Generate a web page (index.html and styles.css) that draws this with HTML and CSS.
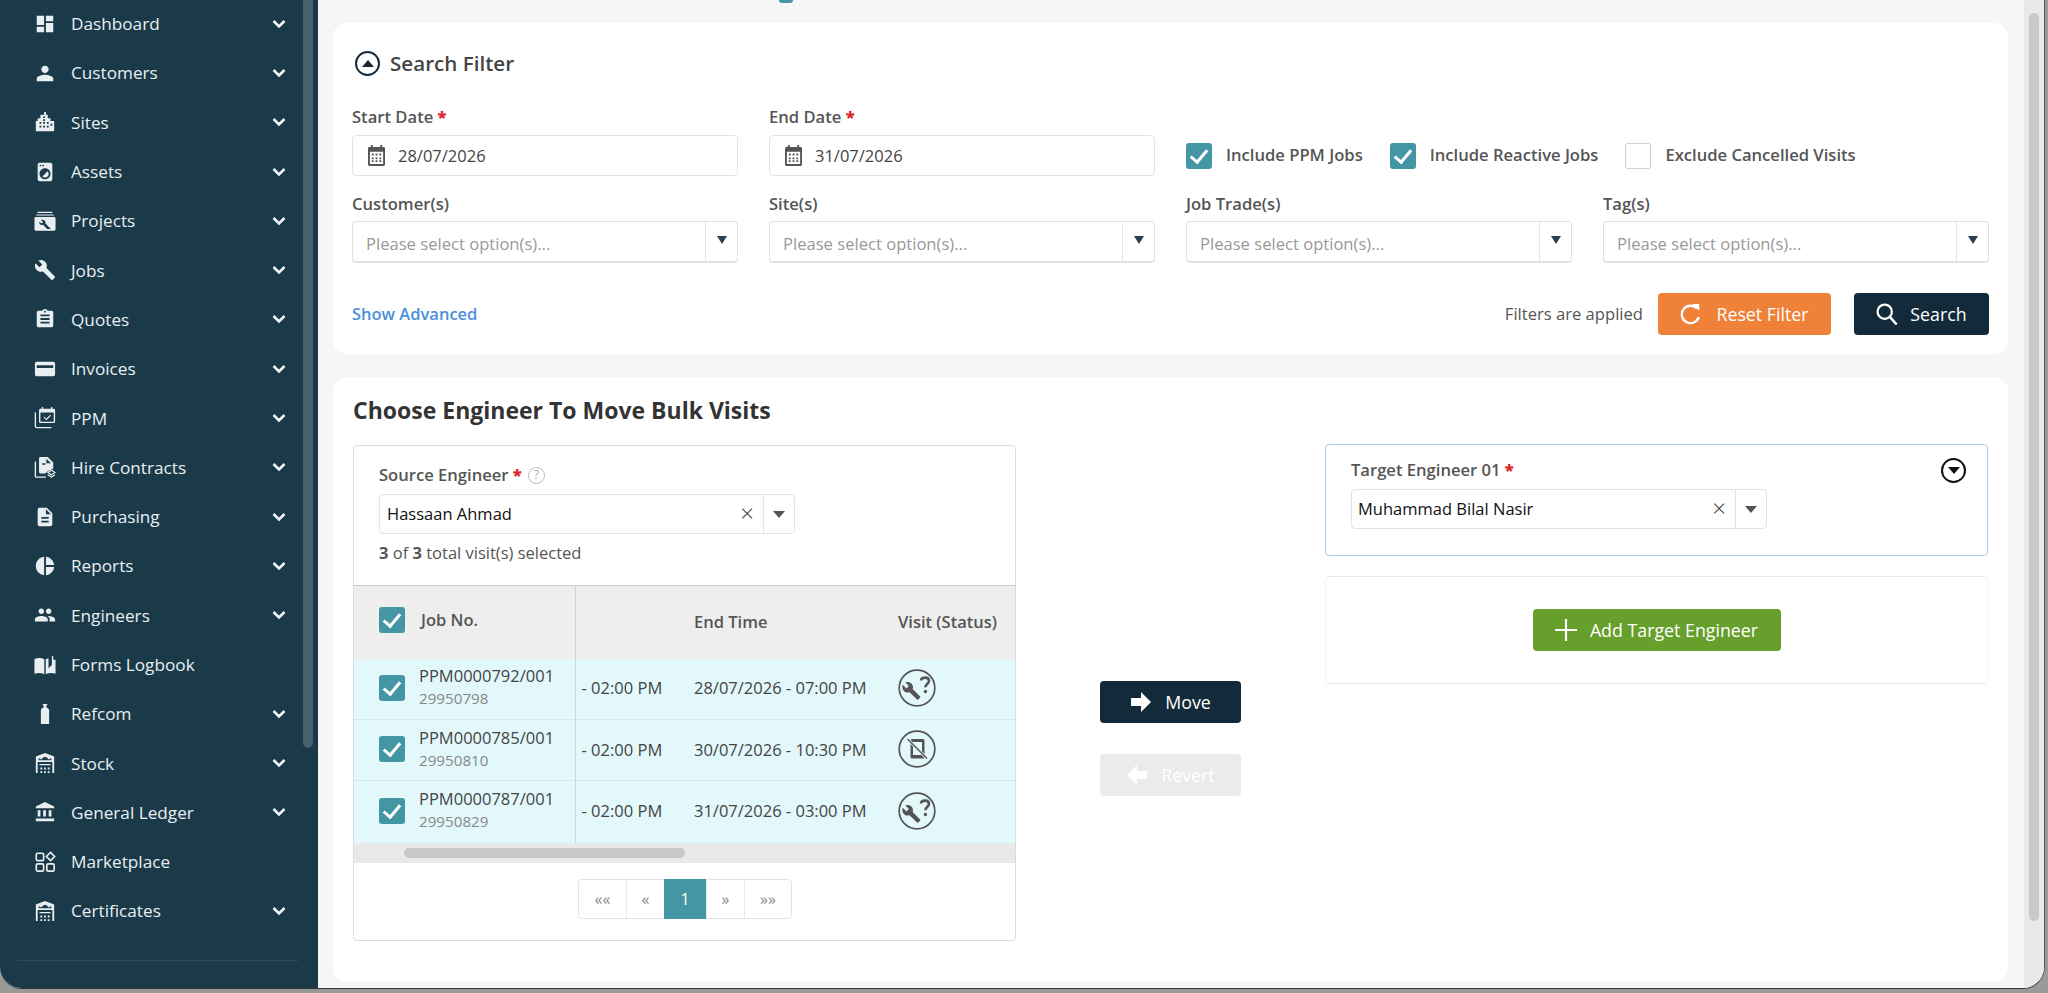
FILE: index.html
```html
<!DOCTYPE html>
<html lang="en">
<head>
    <meta charset="UTF-8">
    <meta name="viewport" content="width=device-width, initial-scale=1.0">
    <link rel="stylesheet" href="styles.css">
    <title>Bulk Move Visits</title>
</head>
<body>
    <!-- iconos reutilizables -->
    <svg class="iconos" xmlns="http://www.w3.org/2000/svg">
        <symbol id="i-chevron" viewBox="0 0 14 10"><path d="M1.5 2l5.5 5.5L12.5 2" fill="none" stroke="currentColor" stroke-width="2.6"/></symbol>
        <symbol id="i-dashboard" viewBox="0 0 24 24"><path d="M3 13h8V3H3v10zm0 8h8v-6H3v6zm10 0h8V11h-8v10zm0-18v6h8V3h-8z"/></symbol>
        <symbol id="i-person" viewBox="0 0 24 24"><path d="M12 12c2.21 0 4-1.79 4-4s-1.79-4-4-4-4 1.79-4 4 1.79 4 4 4zm0 2c-2.67 0-9 1.34-9 4v3h18v-3c0-2.66-6.33-4-9-4z"/></symbol>
        <symbol id="i-sites" viewBox="0 0 24 24"><path fill-rule="evenodd" d="M11 1h2v3h2v4h3v3h4v11H2V11h2V8h3V4h4zM6 12v2h2v-2zm4 0v2h2v-2zm4 0v2h2v-2zm4 2v2h2v-2zM6 16v2h2v-2zm4 0v2h2v-2zm4 0v2h2v-2zm-4-7v2h2V9zm0-3v1.500h2V6z"/></symbol>
        <symbol id="i-laundry" viewBox="0 0 24 24"><path d="M9.170 16.830c1.560 1.560 4.100 1.560 5.660 0 1.560-1.560 1.560-4.100 0-5.660l-5.660 5.660zM18 2.010L6 2c-1.110 0-2 .89-2 2v16c0 1.110.89 2 2 2h12c1.110 0 2-.89 2-2V4c0-1.110-.89-1.990-2-1.990zM10 4c.55 0 1 .45 1 1s-.45 1-1 1-1-.45-1-1 .45-1 1-1zM7 4c.55 0 1 .45 1 1s-.45 1-1 1-1-.45-1-1 .45-1 1-1zm5 16c-3.310 0-6-2.690-6-6s2.690-6 6-6 6 2.690 6 6-2.690 6-6 6z"/></symbol>
        <symbol id="i-projects" viewBox="0 0 24 24"><path d="M4 2h16v1.200H4zM2.500 4.800h19V6h-19z"/><path fill-rule="evenodd" d="M2 7.500h20a1.500 1.500 0 0 1 1.500 1.500v12a1.500 1.500 0 0 1-1.500 1.500H2A1.500 1.500 0 0 1 .5 21V9A1.500 1.500 0 0 1 2 7.500zm5.500 3.500l2.500 2-1.700 1.700-2.500-2c-.5 2.500 1.700 4.300 4 3.500l4.500 4.500h4.200l-6-6c.6-2.800-2.200-5-5-3.700z"/></symbol>
        <symbol id="i-wrench" viewBox="0 0 24 24"><path d="M22.700 19l-9.100-9.100c.9-2.300.4-5-1.500-6.900-2-2-5-2.400-7.400-1.300L9 6 6 9 1.600 4.700C.4 7.100.9 10.100 2.900 12.100c1.900 1.900 4.600 2.400 6.900 1.500l9.100 9.100c.4.4 1 .4 1.400 0l2.300-2.300c.5-.4.5-1.100.1-1.400z"/></symbol>
        <symbol id="i-assign" viewBox="0 0 24 24"><path d="M19 3h-4.180C14.400 1.840 13.300 1 12 1c-1.300 0-2.400.84-2.820 2H5c-1.100 0-2 .9-2 2v14c0 1.100.9 2 2 2h14c1.100 0 2-.9 2-2V5c0-1.100-.9-2-2-2zm-7 0c.55 0 1 .45 1 1s-.45 1-1 1-1-.45-1-1 .45-1 1-1zm5 14H7v-2h10v2zm0-4H7v-2h10v2zm0-4H7V7h10v2z"/></symbol>
        <symbol id="i-card" viewBox="0 0 24 24"><path fill-rule="evenodd" d="M3 4h18a2 2 0 0 1 2 2v12a2 2 0 0 1-2 2H3a2 2 0 0 1-2-2V6a2 2 0 0 1 2-2zm0 4v3h18V8z"/></symbol>
        <symbol id="i-ppm" viewBox="0 0 24 24"><path fill-rule="evenodd" d="M7 2h14.500a1.500 1.500 0 0 1 1.500 1.500V16a1.500 1.500 0 0 1-1.500 1.500H7A1.500 1.500 0 0 1 5.500 16V3.500A1.500 1.500 0 0 1 7 2zm0 4v10h14.500V6z"/><path d="M8.500 0h1.500v3H8.500zM18.500 0H20v3h-1.500z"/><path d="M11 11l2.500 2.500 4.500-4.500" fill="none" stroke="currentColor" stroke-width="1.200"/><path d="M1.500 6v15a1.500 1.500 0 0 0 1.500 1.500h16" fill="none" stroke="currentColor" stroke-width="1.500"/></symbol>
        <symbol id="i-hire" viewBox="0 0 24 24"><path fill-rule="evenodd" d="M7 1h8l6 6v7l-5 2-3 2v1H7a1.500 1.500 0 0 1-1.500-1.500v-15A1.500 1.500 0 0 1 7 1zm2 7v1.500h3.500V8zm4.500-5v5h5z"/><path d="M1.500 6v16a1 1 0 0 0 1 1H13" fill="none" stroke="currentColor" stroke-width="1.500"/><path d="M19 15.500l4 2.500-4 2.500-4-2.500zM15 20.500l4 2.500 4-2.500" fill="none" stroke="currentColor" stroke-width="1.200"/></symbol>
        <symbol id="i-doc" viewBox="0 0 24 24"><path d="M14 2H6c-1.100 0-1.990.9-1.990 2L4 20c0 1.100.89 2 1.990 2H18c1.100 0 2-.9 2-2V8l-6-6zm2 16H8v-2h8v2zm0-4H8v-2h8v2zm-3-5V3.500L18.500 9H13z"/></symbol>
        <symbol id="i-pie" viewBox="0 0 24 24"><path d="M11 2v20c-5.070-.5-9-4.790-9-10s3.930-9.500 9-10zm2.030 0v8.990H22c-.47-4.740-4.240-8.520-8.970-8.990zm0 11.010V22c4.740-.47 8.500-4.250 8.970-8.990h-8.970z"/></symbol>
        <symbol id="i-people" viewBox="0 0 24 24"><path d="M16 11c1.660 0 2.990-1.340 2.990-3S17.660 5 16 5c-1.660 0-3 1.340-3 3s1.340 3 3 3zm-8 0c1.660 0 2.990-1.340 2.990-3S9.660 5 8 5C6.340 5 5 6.340 5 8s1.340 3 3 3zm0 2c-2.330 0-7 1.170-7 3.500V19h14v-2.500c0-2.330-4.670-3.500-7-3.500zm8 0c-.29 0-.62.02-.97.05 1.160.84 1.970 1.970 1.970 3.450V19h6v-2.500c0-2.330-4.670-3.500-7-3.500z"/></symbol>
        <symbol id="i-book" viewBox="0 0 24 24"><path d="M.5 5.500c3.500-1.500 7.500-1.500 10.700.3V22c-3.200-1.700-7.200-1.700-10.700-.4z"/><path d="M12.800 5.800c.9-.5 1.900-.9 3-1.100V15.500l3.700-3.500V2.300l1.400-.4V6c.9.100 1.700.3 2.600.5v15.100c-3.500-1.300-7.500-1.300-10.700.4z"/></symbol>
        <symbol id="i-bottle" viewBox="0 0 24 24"><path d="M9.500 1h5v1.500h-1V5c2 .5 3 1.800 3 3.500V22a1 1 0 0 1-1 1h-7a1 1 0 0 1-1-1V8.500C7.500 6.800 8.500 5.500 10.500 5V2.500h-1z"/></symbol>
        <symbol id="i-store" viewBox="0 0 24 24"><path fill-rule="evenodd" d="M12 1l10 4v18h-2V11H4v12H2V5zM5 7v2h14V7l-2 .1V8h-2V6.500l-3-1.200-3 1.200V8H7v-.9z"/><path d="M6 13h12v1.500H6zM7 17h2v2H7zM11 17h2v2h-2zM15 17h2v2h-2zM7 21h2v2H7zM11 21h2v2h-2zM15 21h2v2h-2z"/></symbol>
        <symbol id="i-bank" viewBox="0 0 24 24"><path d="M4 10v7h3v-7H4zm6 0v7h3v-7h-3zM2 22h20v-3H2v3zm14-12v7h3v-7h-3zM12 1L2 6v2h20V6L12 1z"/></symbol>
        <symbol id="i-market" viewBox="0 0 24 24"><g fill="none" stroke="currentColor" stroke-width="1.800"><rect x="2.500" y="2.500" width="8" height="8" rx="1.500"/><rect x="2.500" y="14" width="8" height="8" rx="1.500"/><rect x="14" y="14" width="8" height="8" rx="1.500"/><path d="M18 1.500l4.500 4.500-4.500 4.500-4.500-4.500z"/></g></symbol>
        <symbol id="i-calendar" viewBox="0 0 18 22"><path fill-rule="evenodd" d="M3 0h2v2h8V0h2v2h1.500A1.500 1.500 0 0 1 18 3.500v17a1.500 1.500 0 0 1-1.500 1.500h-15A1.500 1.500 0 0 1 0 20.500v-17A1.500 1.500 0 0 1 1.500 2H3zM2 7v13h14V7zm2 2h2v2H4zm4 0h2v2H8zm4 0h2v2h-2zm-8 4h2v2H4zm4 0h2v2H8zm4 0h2v2h-2zm-8 3h2v2H4zm4 0h2v2H8zm4 0h2v2h-2z"/></symbol>
        <symbol id="i-status-q" viewBox="0 0 38 38"><circle cx="19" cy="19" r="17.800" fill="none" stroke="currentColor" stroke-width="1.700"/><path transform="translate(3.500 12) scale(.82)" d="M22.700 19l-9.100-9.100c.9-2.300.4-5-1.500-6.900-2-2-5-2.400-7.400-1.300L9 6 6 9 1.600 4.700C.4 7.100.9 10.100 2.900 12.100c1.900 1.900 4.600 2.400 6.900 1.500l9.100 9.100c.4.400 1 .4 1.400 0l2.300-2.300c.5-.4.5-1.100.1-1.400z" fill="currentColor"/><path d="M23 11.500c.3-3.800 8-4 8 .3 0 3-3.400 2.800-3.600 6.500" fill="none" stroke="currentColor" stroke-width="2.600"/><circle cx="27.400" cy="22.500" r="1.700" fill="currentColor"/></symbol>
        <symbol id="i-status-x" viewBox="0 0 38 38"><circle cx="19" cy="19" r="17.800" fill="none" stroke="currentColor" stroke-width="1.700"/><path fill-rule="evenodd" d="M14 9h11a1.500 1.500 0 0 1 1.500 1.500v16.500a1.500 1.500 0 0 1-1.500 1.500H14a1.500 1.500 0 0 1-1.500-1.500V10.500A1.500 1.500 0 0 1 14 9zm1 3v13h9V12z" fill="currentColor"/><path d="M9.500 9l19.500 19.500" stroke="#e2f8fb" stroke-width="3"/><path d="M9.500 9l19.500 19.500" stroke="currentColor" stroke-width="1.500"/></symbol>
    </svg>

    <div class="ventana">
        <aside class="lateral">
            <div class="lateral-scroll">
                <ul class="menu">
                    <li><svg class="ico"><use href="#i-dashboard"/></svg>Dashboard<svg class="flecha"><use href="#i-chevron"/></svg></li>
                    <li><svg class="ico"><use href="#i-person"/></svg>Customers<svg class="flecha"><use href="#i-chevron"/></svg></li>
                    <li><svg class="ico"><use href="#i-sites"/></svg>Sites<svg class="flecha"><use href="#i-chevron"/></svg></li>
                    <li><svg class="ico"><use href="#i-laundry"/></svg>Assets<svg class="flecha"><use href="#i-chevron"/></svg></li>
                    <li><svg class="ico"><use href="#i-projects"/></svg>Projects<svg class="flecha"><use href="#i-chevron"/></svg></li>
                    <li><svg class="ico"><use href="#i-wrench"/></svg>Jobs<svg class="flecha"><use href="#i-chevron"/></svg></li>
                    <li><svg class="ico"><use href="#i-assign"/></svg>Quotes<svg class="flecha"><use href="#i-chevron"/></svg></li>
                    <li><svg class="ico"><use href="#i-card"/></svg>Invoices<svg class="flecha"><use href="#i-chevron"/></svg></li>
                    <li><svg class="ico"><use href="#i-ppm"/></svg>PPM<svg class="flecha"><use href="#i-chevron"/></svg></li>
                    <li><svg class="ico"><use href="#i-hire"/></svg>Hire Contracts<svg class="flecha"><use href="#i-chevron"/></svg></li>
                    <li><svg class="ico"><use href="#i-doc"/></svg>Purchasing<svg class="flecha"><use href="#i-chevron"/></svg></li>
                    <li><svg class="ico"><use href="#i-pie"/></svg>Reports<svg class="flecha"><use href="#i-chevron"/></svg></li>
                    <li><svg class="ico"><use href="#i-people"/></svg>Engineers<svg class="flecha"><use href="#i-chevron"/></svg></li>
                    <li><svg class="ico"><use href="#i-book"/></svg>Forms Logbook</li>
                    <li><svg class="ico"><use href="#i-bottle"/></svg>Refcom<svg class="flecha"><use href="#i-chevron"/></svg></li>
                    <li><svg class="ico"><use href="#i-store"/></svg>Stock<svg class="flecha"><use href="#i-chevron"/></svg></li>
                    <li><svg class="ico"><use href="#i-bank"/></svg>General Ledger<svg class="flecha"><use href="#i-chevron"/></svg></li>
                    <li><svg class="ico"><use href="#i-market"/></svg>Marketplace</li>
                    <li><svg class="ico"><use href="#i-store"/></svg>Certificates<svg class="flecha"><use href="#i-chevron"/></svg></li>
                </ul>
                <hr class="separador">
            </div>
            <div class="lateral-barra"><span></span></div>
        </aside>

        <main class="principal">
            <div class="contenido">
                <div class="asomo"></div>

                <section class="tarjeta filtro">
                    <h2 class="filtro-titulo">
                        <span class="circulo"><span class="tri-arriba"></span></span>
                        Search Filter
                    </h2>
                    <div class="filtro-campos">
                        <div class="campo">
                            <label>Start Date <b>*</b></label>
                            <div class="entrada"><svg class="cal"><use href="#i-calendar"/></svg>28/07/2026</div>
                        </div>
                        <div class="campo">
                            <label>End Date <b>*</b></label>
                            <div class="entrada"><svg class="cal"><use href="#i-calendar"/></svg>31/07/2026</div>
                        </div>
                        <div class="marcas">
                            <span class="marca"><i class="check"></i><span>Include PPM Jobs</span></span>
                            <span class="marca"><i class="check"></i><span>Include Reactive Jobs</span></span>
                            <span class="marca"><i class="check vacio"></i><span>Exclude Cancelled Visits</span></span>
                        </div>
                        <div class="campo">
                            <label>Customer(s)</label>
                            <div class="selector"><span>Please select option(s)...</span><em></em></div>
                        </div>
                        <div class="campo">
                            <label>Site(s)</label>
                            <div class="selector"><span>Please select option(s)...</span><em></em></div>
                        </div>
                        <div class="campo">
                            <label>Job Trade(s)</label>
                            <div class="selector"><span>Please select option(s)...</span><em></em></div>
                        </div>
                        <div class="campo">
                            <label>Tag(s)</label>
                            <div class="selector"><span>Please select option(s)...</span><em></em></div>
                        </div>
                    </div>
                    <div class="filtro-pie">
                        <a class="avanzado">Show Advanced</a>
                        <div class="filtro-acciones">
                            <span class="aplicados">Filters are applied</span>
                            <button class="btn btn-naranja">
                                <svg class="btn-ico" viewBox="0 0 24 24"><path d="M18.500 6A9.500 9.500 0 1 0 20.500 15.500" fill="none" stroke="currentColor" stroke-width="2.600"/><path d="M13.500 1h7.500v7.500z" fill="currentColor"/></svg>
                                Reset Filter
                            </button>
                            <button class="btn btn-oscuro btn-buscar">
                                <svg class="btn-ico" viewBox="0 0 24 24"><circle cx="9.500" cy="9.500" r="7.800" fill="none" stroke="currentColor" stroke-width="2.400"/><path d="M15 15l7.500 8.500" stroke="currentColor" stroke-width="2.800"/></svg>
                                Search
                            </button>
                        </div>
                    </div>
                </section>

                <section class="tarjeta mover">
                    <h2 class="mover-titulo">Choose Engineer To Move Bulk Visits</h2>
                    <div class="mover-columnas">
                        <div class="origen">
                            <div class="origen-cabecera">
                                <label>Source Engineer <b>*</b><span class="ayuda">?</span></label>
                                <div class="combo combo-origen"><span>Hassaan Ahmad</span><u>&times;</u><em></em></div>
                                <p class="resumen"><strong>3</strong> of <strong>3</strong> total visit(s) selected</p>
                            </div>
                            <table class="visitas">
                                <colgroup><col class="c-job"><col class="c-ini"><col class="c-fin"><col></colgroup>
                                <thead>
                                    <tr>
                                        <th class="job"><div class="job-fila"><i class="check"></i><span>Job No.</span></div></th>
                                        <th></th>
                                        <th>End Time</th>
                                        <th>Visit (Status)</th>
                                    </tr>
                                </thead>
                                <tbody>
                                    <tr>
                                        <td class="job"><div class="job-fila"><i class="check"></i><div>PPM0000792/001<small>29950798</small></div></div></td>
                                        <td>- 02:00 PM</td>
                                        <td>28/07/2026 - 07:00 PM</td>
                                        <td><svg class="estado"><use href="#i-status-q"/></svg></td>
                                    </tr>
                                    <tr>
                                        <td class="job"><div class="job-fila"><i class="check"></i><div>PPM0000785/001<small>29950810</small></div></div></td>
                                        <td>- 02:00 PM</td>
                                        <td>30/07/2026 - 10:30 PM</td>
                                        <td><svg class="estado"><use href="#i-status-x"/></svg></td>
                                    </tr>
                                    <tr>
                                        <td class="job"><div class="job-fila"><i class="check"></i><div>PPM0000787/001<small>29950829</small></div></div></td>
                                        <td>- 02:00 PM</td>
                                        <td>31/07/2026 - 03:00 PM</td>
                                        <td><svg class="estado"><use href="#i-status-q"/></svg></td>
                                    </tr>
                                </tbody>
                            </table>
                            <div class="barra-h"><span></span></div>
                            <ul class="paginas">
                                <li class="p-ext">&laquo;&laquo;</li>
                                <li class="p-int">&laquo;</li>
                                <li class="activa">1</li>
                                <li class="p-int">&raquo;</li>
                                <li class="p-ext">&raquo;&raquo;</li>
                            </ul>
                        </div>

                        <div class="centro">
                            <button class="btn btn-oscuro">
                                <svg class="flecha-btn" viewBox="0 0 22 20"><path d="M1 6h10V0l10 10-10 10v-6H1z" fill="currentColor"/></svg>
                                Move
                            </button>
                            <button class="btn btn-apagado">
                                <svg class="flecha-btn" viewBox="0 0 22 20"><path d="M21 6H11V0L1 10l10 10v-6h10z" fill="currentColor"/></svg>
                                Revert
                            </button>
                        </div>

                        <div class="destino">
                            <div class="destino-panel">
                                <div class="destino-cabecera">
                                    <label>Target Engineer 01 <b>*</b></label>
                                    <span class="circulo negro"><span class="tri-abajo"></span></span>
                                </div>
                                <div class="combo combo-destino"><span>Muhammad Bilal Nasir</span><u>&times;</u><em></em></div>
                            </div>
                            <div class="destino-nuevo">
                                <button class="btn btn-verde">
                                    <svg class="btn-ico" viewBox="0 0 20 20"><path d="M10 0v20M0 10h20" stroke="currentColor" stroke-width="2"/></svg>
                                    Add Target Engineer
                                </button>
                            </div>
                        </div>
                    </div>
                </section>
            </div>
            <div class="barra-v"><span></span></div>
        </main>
    </div>
</body>
</html>
```

FILE: styles.css
```css
* {
    margin: 0;
    padding: 0;
    box-sizing: border-box;
    font-family: 'Open Sans', 'Liberation Sans', sans-serif;
}
html, body {
    height: 100%;
    overflow: hidden;
}
body {
    background: #9a9a9a;
}
.iconos {
    display: none;
}
.ventana {
    width: 2045px;
    height: 989px;
    display: flex;
    overflow: hidden;
    background: #f6f6f6;
    border-bottom: 1px solid #333;
    border-right: 1px solid #555;
    border-radius: 0 0 22px 22px;
}

/* lateral */
.lateral {
    width: 318px;
    flex-shrink: 0;
    display: flex;
    background: #1a3a4a;
    color: #e9eff1;
}
.lateral-scroll {
    width: 303px;
    overflow: hidden;
}
.menu {
    list-style: none;
    margin-top: -1px;
}
.menu li {
    height: 49.3px;
    display: flex;
    align-items: center;
    font-size: 17.2px;
    padding-left: 34px;
}
.ico {
    width: 22px;
    height: 22px;
    margin-right: 15px;
    fill: currentColor;
    color: #e9eff1;
}
.flecha {
    width: 14px;
    height: 10px;
    margin-left: auto;
    margin-right: 17px;
    color: #f4f7f8;
}
.separador {
    margin: 24px 5px 0 17px;
    border: 0;
    border-top: 1px solid #2b4b5c;
}
.lateral-barra {
    width: 10px;
}
.lateral-barra span {
    display: block;
    height: 748px;
    background: #46606e;
    border-radius: 0 0 5px 5px;
}

/* principal */
.principal {
    flex: 1;
    display: flex;
    min-width: 0;
}
.contenido {
    flex: 1;
    min-width: 0;
    padding: 0 16px 0 15px;
}
.asomo {
    width: 14px;
    height: 3px;
    margin: 0 0 20px 446px;
    background: #4596a4;
    border-radius: 0 0 7px 7px;
}
.barra-v {
    width: 20px;
    flex-shrink: 0;
    background: #e9e9e9;
    padding: 13px 5px 0;
}
.barra-v span {
    display: block;
    height: 908px;
    background: #c9c9c9;
    border-radius: 5px;
}
.tarjeta {
    background: #fff;
    border-radius: 14px;
}

/* filtro */
.filtro {
    height: 331px;
    padding: 20px 19px 19px;
}
.filtro-titulo {
    height: 40px;
    display: flex;
    align-items: center;
    gap: 10px;
    font-size: 20.6px;
    font-weight: 600;
    color: #444;
    margin: 0 0 22px 3px;
}
.circulo {
    width: 25px;
    height: 25px;
    border: 2.5px solid #12283a;
    border-radius: 50%;
    display: flex;
    align-items: center;
    justify-content: center;
}
.circulo.negro {
    border-color: #111;
}
.tri-arriba {
    border: 6px solid transparent;
    border-top: 0;
    border-bottom: 7px solid #12283a;
}
.tri-abajo {
    border: 6px solid transparent;
    border-bottom: 0;
    border-top: 7px solid #111;
}
.filtro-campos {
    display: grid;
    grid-template-columns: repeat(4, 386px);
    column-gap: 31px;
    row-gap: 16px;
}
label {
    display: block;
    height: 24px;
    line-height: 24px;
    font-size: 16.6px;
    font-weight: 600;
    color: #555;
}
label b {
    color: #d9262b;
}
.entrada {
    height: 41px;
    margin-top: 6px;
    display: flex;
    align-items: center;
    border: 1px solid #e4e4e4;
    border-radius: 4px;
    padding-left: 15px;
    font-size: 16.5px;
    color: #444;
}
.cal {
    width: 17px;
    height: 21px;
    margin-right: 13px;
    fill: #555;
}
.marcas {
    grid-column: span 2;
    align-self: end;
    height: 41px;
    display: flex;
    align-items: center;
    gap: 27px;
}
.marca {
    display: flex;
    align-items: center;
    gap: 14px;
    font-size: 16.6px;
    font-weight: 600;
    color: #555;
}
.marca span {
    margin-top: -2px;
}
.check {
    width: 26px;
    height: 26px;
    flex-shrink: 0;
    display: flex;
    align-items: center;
    justify-content: center;
    background: #4596a4;
    border-radius: 3px;
}
.check::after {
    content: "";
    width: 7px;
    height: 14px;
    margin-top: -3px;
    border: solid #fff;
    border-width: 0 3px 3px 0;
    transform: rotate(40deg);
}
.check.vacio {
    background: #fff;
    border: 1px solid #cfcfcf;
}
.check.vacio::after {
    display: none;
}
.selector {
    height: 42px;
    margin-top: 5px;
    display: flex;
    align-items: center;
    border: 1px solid #e2e2e2;
    border-bottom-width: 2px;
    border-radius: 4px;
    font-size: 16.6px;
    color: #999;
}
.selector span {
    flex: 1;
    padding: 3px 0 0 13px;
}
.selector em {
    width: 32px;
    height: 100%;
    border-left: 1px solid #e6e6e6;
    display: flex;
    align-items: center;
    justify-content: center;
}
.selector em::after {
    content: "";
    border: 5px solid transparent;
    border-bottom: 0;
    border-top: 8px solid #2c3e50;
    margin-top: -3px;
}
.filtro-pie {
    display: flex;
    align-items: center;
    justify-content: space-between;
    margin-top: 30px;
}
.avanzado {
    font-size: 16.5px;
    font-weight: 600;
    color: #4a90d9;
    margin-top: -2px;
}
.filtro-acciones {
    display: flex;
    align-items: center;
}
.aplicados {
    font-size: 16.6px;
    color: #555;
    margin: -2px 15px 0 0;
}
.btn {
    height: 42px;
    border: 0;
    border-radius: 4px;
    display: flex;
    align-items: center;
    justify-content: center;
    font-size: 17.8px;
    font-weight: 500;
    color: #fff;
}
.btn-ico {
    width: 22px;
    height: 22px;
    flex-shrink: 0;
}
.btn-naranja {
    width: 173px;
    gap: 14px;
    background: #f08138;
    margin-right: 23px;
}
.btn-oscuro {
    background: #132a3a;
}
.btn-buscar {
    width: 135px;
    gap: 12px;
}

/* mover visitas */
.mover {
    height: 605px;
    margin-top: 23px;
    padding: 18px 20px 0;
}
.mover-titulo {
    height: 30px;
    line-height: 30px;
    font-size: 23px;
    font-weight: 700;
    color: #333;
}
.mover-columnas {
    display: flex;
    justify-content: space-between;
    align-items: flex-start;
    margin-top: 20px;
}
.origen {
    width: 663px;
    height: 496px;
    border: 1px solid #dcdcdc;
    border-radius: 4px;
    overflow: hidden;
}
.origen-cabecera {
    padding: 17px 25px 0;
}
.ayuda {
    display: inline-flex;
    align-items: center;
    justify-content: center;
    width: 17px;
    height: 17px;
    margin-left: 6px;
    border: 1px solid #bbb;
    border-radius: 50%;
    font-size: 12px;
    font-weight: 400;
    color: #aaa;
    vertical-align: 2px;
}
.combo {
    height: 40px;
    display: flex;
    align-items: center;
    border: 1px solid #e4e4e4;
    border-radius: 4px;
    font-size: 16.5px;
    color: #111;
}
.combo span {
    flex: 1;
    margin-top: -2px;
}
.combo u {
    text-decoration: none;
    font-size: 24px;
    font-weight: 300;
    line-height: 1;
    color: #444;
    margin: -3px 9px 0 0;
}
.combo em {
    height: 100%;
    border-left: 1px solid #e4e4e4;
    display: flex;
    align-items: center;
    justify-content: center;
}
.combo em::after {
    content: "";
    border: 6px solid transparent;
    border-bottom: 0;
    border-top: 7px solid #555;
}
.combo-origen {
    width: 416px;
    margin-top: 7px;
}
.combo-origen span {
    padding-left: 7px;
}
.combo-origen em {
    width: 31px;
}
.combo-destino {
    width: 416px;
    margin-top: 7px;
}
.combo-destino span {
    padding-left: 6px;
}
.combo-destino em {
    width: 31px;
}
.resumen {
    height: 24px;
    line-height: 24px;
    margin-top: 7px;
    font-size: 16.5px;
    color: #555;
}
.resumen strong {
    font-weight: 700;
}
.visitas {
    width: 100%;
    margin-top: 20px;
    table-layout: fixed;
    border-collapse: collapse;
}
.c-job {
    width: 221px;
}
.c-ini {
    width: 119px;
}
.c-fin {
    width: 204px;
}
.visitas th {
    height: 73px;
    padding-bottom: 2px;
    background: #eee;
    border-top: 1px solid #ccc;
    text-align: left;
    font-size: 16.5px;
    font-weight: 600;
    color: #555;
}
.visitas td {
    height: 61px;
    padding-bottom: 2px;
    background: #e2f8fb;
    border-bottom: 1px solid #d6e6e9;
    font-size: 16.5px;
    color: #444;
}
.visitas tbody tr:last-child td {
    height: 62px;
    border-bottom: 0;
}
.visitas .job {
    border-right: 1px solid #d0d6d8;
    padding-left: 25px;
}
.visitas td:nth-child(2) {
    padding-left: 6px;
}
.job-fila {
    display: flex;
    align-items: center;
}
th .job-fila {
    gap: 16px;
    margin-top: -3px;
}
td .job-fila {
    gap: 14px;
}
td .job-fila div {
    line-height: 23px;
    margin-top: -1px;
}
.job small {
    display: block;
    font-size: 15.2px;
    color: #888;
}
.estado {
    display: block;
    width: 38px;
    height: 38px;
    color: #555;
}
.barra-h {
    height: 20px;
    background: #e9e9e9;
    padding: 5px 0 0 50px;
}
.barra-h span {
    display: block;
    width: 281px;
    height: 10px;
    background: #c8c8c8;
    border-radius: 5px;
}
.paginas {
    list-style: none;
    display: flex;
    width: 214px;
    height: 40px;
    margin: 16px 0 0 224px;
    border: 1px solid #e4e4e4;
    border-radius: 4px;
}
.paginas li {
    display: flex;
    align-items: center;
    justify-content: center;
    font-size: 16px;
    color: #888;
}
.p-ext {
    width: 47px;
}
.p-int {
    width: 38px;
    border-left: 1px solid #e8e8e8;
}
.p-int + .p-ext {
    border-left: 1px solid #e8e8e8;
}
.paginas .activa {
    width: 42px;
    background: #4596a4;
    color: #fff;
    margin: -1px 0;
}

.centro {
    width: 141px;
    margin-top: 236px;
    display: flex;
    flex-direction: column;
    gap: 31px;
}
.centro .btn {
    gap: 13px;
}
.flecha-btn {
    width: 22px;
    height: 20px;
}
.btn-apagado {
    background: #ebebeb;
}

.destino {
    width: 663px;
    margin-top: -1px;
}
.destino-panel {
    height: 112px;
    border: 1px solid #a9cbeb;
    border-radius: 4px;
    padding: 13px 21px 0 25px;
}
.destino-cabecera {
    height: 24px;
    display: flex;
    align-items: center;
    justify-content: space-between;
}
.destino-nuevo {
    height: 108px;
    margin-top: 20px;
    border: 1px dotted #d2d2d2;
    border-left-color: #eaeaea;
    border-right-color: #eaeaea;
    border-radius: 4px;
    display: flex;
    align-items: center;
    justify-content: center;
}
.btn-verde {
    width: 248px;
    gap: 13px;
    background: #669f2c;
}
```
